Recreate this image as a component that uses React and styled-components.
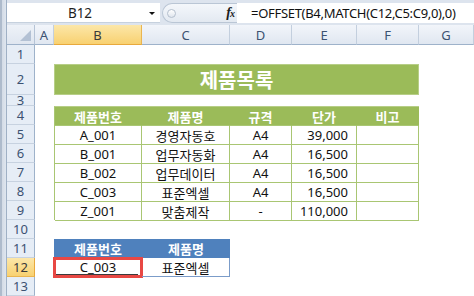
import styled, { createGlobalStyle } from "styled-components";

const GlobalStyle = createGlobalStyle`
  html, body {
    margin: 0;
    padding: 0;
    background: #ffffff;
  }
  body {
    width: 474px;
    height: 296px;
    overflow: hidden;
    font-family: "Noto Sans", "Noto Sans CJK KR", sans-serif;
  }
`;

const products = [
  { code: "A_001", name: "경영자동호", size: "A4", price: "39,000" },
  { code: "B_001", name: "업무자동화", size: "A4", price: "16,500" },
  { code: "B_002", name: "업무데이터", size: "A4", price: "16,500" },
  { code: "C_003", name: "표준엑셀", size: "A4", price: "16,500" },
  { code: "Z_001", name: "맞춤제작", size: "-", price: "110,000" },
];

const columns = ["A", "B", "C", "D", "E", "F", "G"];
const rows = [1, 2, 3, 4, 5, 6, 7, 8, 9, 10, 11, 12, 13];

export default function App() {
  return (
    <>
      <GlobalStyle />
      <Window>
        <Frame />
        <Main>
          <FormulaBar>
            <NameBox>
              <NameText>B12</NameText>
              <DropArrow />
            </NameBox>
            <FuncBox>
              <Knob />
              <Fx>
                f<small>x</small>
              </Fx>
            </FuncBox>
            <FormulaInput>=OFFSET(B4,MATCH(C12,C5:C9,0),0)</FormulaInput>
          </FormulaBar>

          <Sheet>
            <Corner>
              <CornerMark />
            </Corner>
            {columns.map((c) => (
              <ColHeader key={c} $selected={c === "B"}>
                {c}
              </ColHeader>
            ))}
            {rows.map((r) => (
              <RowHeader key={r} $row={r + 1} $selected={r === 12}>
                {r}
              </RowHeader>
            ))}

            <Title>제품목록</Title>

            <ProductTable>
              <HeadCell>제품번호</HeadCell>
              <HeadCell>제품명</HeadCell>
              <HeadCell>규격</HeadCell>
              <HeadCell>단가</HeadCell>
              <HeadCell>비고</HeadCell>
              {products.map((p) => (
                <Row key={p.code}>
                  <Cell>{p.code}</Cell>
                  <Cell>{p.name}</Cell>
                  <Cell>{p.size}</Cell>
                  <Cell $right>{p.price}</Cell>
                  <Cell />
                </Row>
              ))}
            </ProductTable>

            <LookupTable>
              <LookupHead>제품번호</LookupHead>
              <LookupHead>제품명</LookupHead>
              <LookupCell $marked>C_003</LookupCell>
              <LookupCell>표준엑셀</LookupCell>
            </LookupTable>
          </Sheet>
        </Main>
      </Window>
    </>
  );
}

const Window = styled.div`
  display: flex;
  width: 474px;
  height: 296px;
  overflow: hidden;
`;

const Frame = styled.div`
  width: 7px;
  flex: none;
  background: linear-gradient(to right, #aebbcc 0, #aebbcc 2px, #d3dbe6 2px, #dfe6ef 6px, #9fb0c5 6px);
`;

const Main = styled.div`
  flex: 1;
  display: flex;
  flex-direction: column;
  min-width: 0;
`;

const FormulaBar = styled.div`
  display: flex;
  height: 20px;
  padding: 3px 0 2px;
  background: #dde4ee;
`;

const NameBox = styled.div`
  width: 153px;
  display: flex;
  align-items: center;
  background: #ffffff;
  border-bottom: 1px solid #c6d1de;
  box-sizing: border-box;
`;

const NameText = styled.span`
  flex: 1;
  text-align: center;
  font-size: 13.5px;
  color: #1f1f1f;
  padding-left: 8px;
`;

const DropArrow = styled.span`
  width: 0;
  height: 0;
  margin: 1px 5px 0 4px;
  border-left: 3px solid transparent;
  border-right: 3px solid transparent;
  border-top: 3px solid #111111;
`;

const FuncBox = styled.div`
  width: 75px;
  margin-left: 2px;
  display: flex;
  align-items: center;
  justify-content: space-between;
  padding: 0 3px 0 4px;
  box-sizing: border-box;
  border: 1px solid #bac6d5;
  border-right: none;
  border-radius: 10px 0 0 10px;
  background: linear-gradient(#f4f7fb, #e3e9f1);
`;

const Knob = styled.span`
  width: 7px;
  height: 7px;
  border-radius: 50%;
  border: 1px solid #b4bfcd;
  background: linear-gradient(#ffffff, #dfe5ed);
`;

const Fx = styled.span`
  font-family: "Liberation Serif", serif;
  font-style: italic;
  font-weight: bold;
  font-size: 14px;
  color: #1b1b1b;
  letter-spacing: -1px;

  small {
    font-size: 10px;
  }
`;

const FormulaInput = styled.div`
  flex: 1;
  background: #ffffff;
  padding-left: 14px;
  font-size: 13px;
  letter-spacing: -0.3px;
  line-height: 20px;
  color: #111111;
  white-space: nowrap;
`;

const Sheet = styled.div`
  display: grid;
  grid-template-columns: 28px 19px 88px 88px 62px 65px 62px 1fr;
  grid-template-rows: 20px 19px 31px 11px repeat(10, 19px);
  font-size: 13px;
  color: #111111;
`;

const Corner = styled.div`
  grid-row: 1;
  grid-column: 1;
  display: flex;
  align-items: flex-end;
  justify-content: flex-end;
  padding: 0 3px 3px 0;
  background: linear-gradient(#eef2f8, #dfe6f0);
  border-right: 1px solid #b6c4d6;
  border-bottom: 1px solid #9eb2ca;
`;

const CornerMark = styled.span`
  width: 0;
  height: 0;
  border-left: 11px solid transparent;
  border-bottom: 11px solid #b3c1d4;
`;

const ColHeader = styled.div`
  grid-row: 1;
  display: flex;
  align-items: center;
  justify-content: center;
  color: ${(p) => (p.$selected ? "#3a3a3a" : "#3c5272")};
  background: ${(p) =>
    p.$selected
      ? "linear-gradient(#fce7a9, #f8d171)"
      : "linear-gradient(#f2f5fa, #e0e7f1)"};
  border-right: 1px solid ${(p) => (p.$selected ? "#eab550" : "#c3cfde")};
  border-bottom: 1px solid ${(p) => (p.$selected ? "#e8a93c" : "#9eb2ca")};
`;

const RowHeader = styled.div`
  grid-column: 1;
  grid-row: ${(p) => p.$row};
  display: flex;
  align-items: center;
  justify-content: center;
  overflow: hidden;
  color: ${(p) => (p.$selected ? "#3a3a3a" : "#3c5272")};
  background: ${(p) =>
    p.$selected ? "linear-gradient(#fce7a9, #f8d171)" : "#e6edf6"};
  border-right: 1px solid ${(p) => (p.$selected ? "#e8a93c" : "#9eb2ca")};
  border-bottom: 1px solid ${(p) => (p.$selected ? "#eab550" : "#c7d2e0")};
  box-sizing: border-box;
`;

const Title = styled.div`
  grid-row: 3;
  grid-column: 3 / span 5;
  display: flex;
  align-items: center;
  justify-content: center;
  background: #9bbb59;
  border: 1px solid #b7ce87;
  color: #ffffff;
  font-size: 20px;
  font-weight: bold;
  font-family: "Noto Sans CJK KR", sans-serif;
`;

const ProductTable = styled.div`
  grid-row: 5 / span 6;
  grid-column: 3 / span 5;
  display: grid;
  grid-template-columns: 87px 88px 62px 65px 62px;
  grid-auto-rows: 19px;
  border-left: 1px solid #a9c673;
  border-top: 1px solid #b7ce87;
`;

const Row = styled.div`
  display: contents;
`;

const HeadCell = styled.div`
  display: flex;
  align-items: center;
  justify-content: center;
  background: #9bbb59;
  color: #ffffff;
  font-weight: bold;
  border-right: 1px solid #9bbb59;
  border-bottom: 1px solid #a9c673;
`;

const Cell = styled.div`
  display: flex;
  align-items: center;
  justify-content: ${(p) => (p.$right ? "flex-end" : "center")};
  padding-right: ${(p) => (p.$right ? "8px" : "0")};
  border-right: 1px solid #a9c673;
  border-bottom: 1px solid #a9c673;
  white-space: nowrap;
`;

const LookupTable = styled.div`
  grid-row: 12 / span 2;
  grid-column: 3 / span 2;
  display: grid;
  grid-template-columns: 88px 88px;
  grid-auto-rows: 19px;
`;

const LookupHead = styled.div`
  display: flex;
  align-items: center;
  justify-content: center;
  background: #4f81bd;
  color: #ffffff;
  font-weight: bold;
`;

const LookupCell = styled.div`
  position: relative;
  display: flex;
  align-items: center;
  justify-content: center;
  border-right: 1px solid #7b9cc9;
  border-bottom: 1px solid #7b9cc9;

  ${(p) =>
    p.$marked &&
    `
    border-right: none;
    &::before {
      content: "";
      position: absolute;
      left: 2px;
      right: 4px;
      bottom: 1px;
      height: 1px;
      background: #3b3b3b;
    }
    &::after {
      content: "";
      position: absolute;
      top: -1px;
      left: -1px;
      right: -1px;
      bottom: -2px;
      border: 3px solid #e84844;
    }
  `}
`;
